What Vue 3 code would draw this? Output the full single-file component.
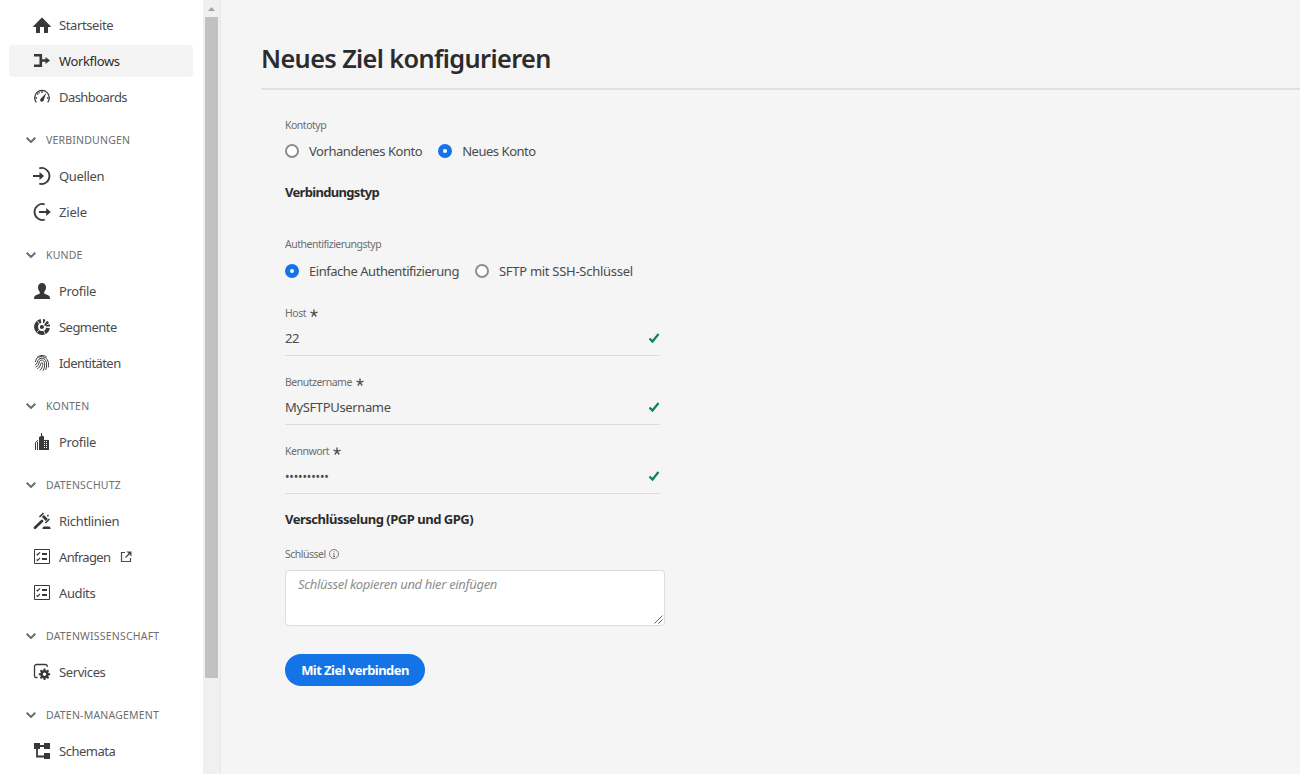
<script setup>
import { ref } from 'vue'

// `track` is the letter spacing of a label, in pixels
const sections = [
  {
    items: [
      { icon: 'home', label: 'Startseite', track: -0.4 },
      { icon: 'workflow', label: 'Workflows', track: -0.35, active: true },
      { icon: 'gauge', label: 'Dashboards', track: -0.55 },
    ],
  },
  {
    title: 'VERBINDUNGEN',
    items: [
      { icon: 'login', label: 'Quellen', track: -0.35 },
      { icon: 'logout', label: 'Ziele', track: -0.2 },
    ],
  },
  {
    title: 'KUNDE',
    items: [
      { icon: 'user', label: 'Profile', track: -0.35 },
      { icon: 'segment', label: 'Segmente', track: -0.53 },
      { icon: 'finger', label: 'Identitäten', track: -0.57 },
    ],
  },
  { title: 'KONTEN', items: [{ icon: 'building', label: 'Profile', track: -0.35 }] },
  {
    title: 'DATENSCHUTZ',
    items: [
      { icon: 'gavel', label: 'Richtlinien', track: -0.33 },
      { icon: 'checklist', label: 'Anfragen', track: -0.64, external: true },
      { icon: 'checklist', label: 'Audits', track: -0.4 },
    ],
  },
  { title: 'DATENWISSENSCHAFT', items: [{ icon: 'service', label: 'Services', track: -0.4 }] },
  { title: 'DATEN-MANAGEMENT', items: [{ icon: 'schema', label: 'Schemata', track: -0.48 }] },
]

const fields = [
  { label: 'Host', value: '22' },
  { label: 'Benutzername', value: 'MySFTPUsername' },
  { label: 'Kennwort', value: '••••••••••', secret: true },
]

const account = ref('new')
const auth = ref('basic')
</script>

<template>
  <div class="app">
    <svg class="sprite" width="0" height="0" aria-hidden="true">
      <symbol id="home" viewBox="0 0 18 18">
        <path d="M9.6 2 17.7 10.2c.3.4.1.8-.3.8H15v5.5c0 .3-.2.5-.5.5H11v-6H7v6H3.500c-.3 0-.5-.2-.5-.5V11H.6c-.4 0-.6-.4-.3-.8L8.400 2c.3-.4.9-.4 1.200 0z" fill="currentColor" />
      </symbol>
      <symbol id="workflow" viewBox="0 0 18 18">
        <path d="M1 3.300h6.800v10.400H1M8 8.500h5" fill="none" stroke="currentColor" stroke-width="2.600" />
        <path d="M12.500 5v7L17 8.500z" fill="currentColor" />
      </symbol>
      <symbol id="gauge" viewBox="0 0 18 18">
        <path d="M3.300 14.300A7.300 7.300 0 1 1 14.700 14.300" fill="none" stroke="currentColor" stroke-width="1.300" />
        <path d="M2.500 10H4M4.300 5.500l1 1M9 3.300v1.700M15.500 10H14M6 4.200l.4 1" fill="none" stroke="currentColor" stroke-width="1.400" />
        <path d="M13.200 5 10.700 12.200a1.800 1.800 0 1 1-2.800-1.700z" fill="currentColor" />
      </symbol>
      <symbol id="login" viewBox="0 0 18 18">
        <path d="M6.300 1.300a8 8 0 1 1 0 15.400" fill="none" stroke="currentColor" stroke-width="1.800" />
        <path d="M0 8h6.500V5l4.600 4-4.600 4v-3H0z" fill="currentColor" />
      </symbol>
      <symbol id="logout" viewBox="0 0 18 18">
        <path d="M11.700 16.700A8 8 0 1 1 11.700 1.300" fill="none" stroke="currentColor" stroke-width="1.800" />
        <path d="M6 8h7.200V5l4.500 4-4.500 4v-3H6z" fill="currentColor" />
      </symbol>
      <symbol id="user" viewBox="0 0 18 18">
        <path d="M9 1c2.400 0 4 1.700 4 4.200 0 2-.8 3.500-1.800 4.500v1.500c0 .5.3.7.8.9 3 .8 5 1.600 5 4.100v.8H1v-.8c0-2.500 2-3.300 5-4.100.5-.2.8-.4.8-.9V9.700C5.800 8.700 5 7.200 5 5.200 5 2.700 6.600 1 9 1z" fill="currentColor" />
      </symbol>
      <symbol id="segment" viewBox="0 0 18 18">
        <path d="M8 3A6 6 0 1 0 15 10" fill="none" stroke="currentColor" stroke-width="4" />
        <path d="M10 1a8 8 0 0 1 2.500.8L11 5.300l-1-.3zM14 2.800a8 8 0 0 1 2 2.200l-4 3-1-1zM16.600 6.300c.3.700.4 1.400.4 2.100h-4l-.3-1z" fill="currentColor" />
        <circle cx="8.900" cy="9" r="2.100" fill="currentColor" />
        <path d="m4.500 3 2 3M4 14l2-2M10.700 12.500l1.500 3.500" stroke="#fff" stroke-width=".8" />
      </symbol>
      <symbol id="finger" viewBox="0 0 18 18">
        <path d="M4.200 3.300C7 .9 11.300.9 13.700 3.200M2.500 8C2.700 2.900 7.400 1.800 11 3.100c3.800 1.400 5.200 5.800 4.300 10.300M2.200 10.800C5 10 3.800 7 6 5.200c2.500-2 6.300-.6 7.200 2.600.7 2.600.5 5.400-.5 8M2.600 13c4.200-1.400 2.800-4.800 4.500-6.300 1.900-1.600 4.300.1 4.500 2.600.3 2.700-.3 5.200-1.600 7.400M4.200 14.900c4-2.200 3-5.800 4.500-6.300 1.700-.3 1.500 4.500-1.800 7.800" fill="none" stroke="currentColor" stroke-width="1" />
      </symbol>
      <symbol id="building" viewBox="0 0 18 18">
        <path d="M6 17V4l2-1V0h1v2.500l2 1V7h5v10z" fill="currentColor" />
        <path d="M2.500 17V9.500L5 7.200M4.500 17V9" fill="none" stroke="currentColor" stroke-width="1" />
        <path d="M11 8.500h1m1 0h1m-3 2h1m1 0h1m-3 2h1m1 0h1m-3 2h1m1 0h1" stroke="#fff" stroke-width="1" />
      </symbol>
      <symbol id="gavel" viewBox="0 0 18 18">
        <path d="M2 15.800 9 9" stroke="currentColor" stroke-width="2.700" stroke-linecap="round" />
        <path d="m8.800 4.800 2.200-1.700 3.900 3.800-2.200 2zM9.500 17v-1.200l1.200-1.300h5.600l1.200 1.300V17z" fill="currentColor" />
        <path d="m6.500 5 4-4M12.400 11l4-4M14.300 4.200l1.200-1.200" stroke="currentColor" stroke-width="1.600" />
      </symbol>
      <symbol id="checklist" viewBox="0 0 18 18">
        <path d="M1.500 1.500h15v14h-15z" fill="none" stroke="currentColor" stroke-width="1" />
        <path d="m3.600 6 1 1L7 4.400M3.600 11.500l1 1L7 9.900" fill="none" stroke="currentColor" stroke-width="1.200" />
        <path d="M9 5h5v2H9zM9 10h5v2H9z" fill="currentColor" />
      </symbol>
      <symbol id="service" viewBox="0 0 18 18">
        <path d="M4.500 14.500H3A1.500 1.500 0 0 1 1.500 13V3.500A2 2 0 0 1 3.500 1.500h9a2 2 0 0 1 1.800 2V4" fill="none" stroke="currentColor" stroke-width="1.300" />
        <path d="M11.500 5.500v11.400M5.800 11.200h11.400M7.500 7.200l8 8M15.500 7.200l-8 8" stroke="currentColor" stroke-width="2" />
        <circle cx="11.500" cy="11.200" r="3" fill="#fff" stroke="currentColor" stroke-width="2.600" />
      </symbol>
      <symbol id="schema" viewBox="0 0 18 18">
        <path d="M1 1h6v6H1zM11 1h6v6h-6zM11 11h6v6h-6z" fill="currentColor" />
        <path d="M6 4h6M4 6v8.500h8" fill="none" stroke="currentColor" stroke-width="1.800" />
      </symbol>
    </svg>

    <nav class="sidebar">
      <section v-for="(s, i) in sections" :key="i" class="section">
        <h2 v-if="s.title" class="section-title">
          <svg class="chevron" viewBox="0 0 10 6"><path d="M.7.700l4.300 4.300L9.300.7" /></svg>
          <span>{{ s.title }}</span>
        </h2>
        <a v-for="item in s.items" :key="item.label" class="item" :class="{ active: item.active }">
          <svg class="icon"><use :href="'#' + item.icon" /></svg>
          <span :style="{ letterSpacing: item.track + 'px' }">{{ item.label }}</span>
          <svg v-if="item.external" class="external" viewBox="0 0 12 12">
            <path d="M5 1.500H1.500v9h9V7" />
            <path d="M5.500 6.500 10 2" />
            <path d="M6.500.500H11.500V5.500z" class="solid" />
          </svg>
        </a>
      </section>
    </nav>

    <div class="scrollbar">
      <svg class="arrow" viewBox="0 0 17 17"><path d="M5 11h7L8.500 7z" /></svg>
      <div class="thumb"></div>
    </div>

    <main class="content">
      <h1>Neues Ziel konfigurieren</h1>
      <form class="form" @submit.prevent>
        <div class="label">Kontotyp</div>
        <div class="radios">
          <label class="radio" :class="{ on: account === 'old' }" @click="account = 'old'"><i></i><span>Vorhandenes Konto</span></label>
          <label class="radio" :class="{ on: account === 'new' }" @click="account = 'new'"><i></i><span>Neues Konto</span></label>
        </div>
        <h3 class="connection">Verbindungstyp</h3>
        <div class="label auth-label">Authentifizierungstyp</div>
        <div class="radios auth">
          <label class="radio" :class="{ on: auth === 'basic' }" @click="auth = 'basic'"><i></i><span>Einfache Authentifizierung</span></label>
          <label class="radio ssh" :class="{ on: auth === 'ssh' }" @click="auth = 'ssh'"><i></i><span>SFTP mit SSH-Schlüssel</span></label>
        </div>

        <div v-for="f in fields" :key="f.label" class="field">
          <div class="label">
            {{ f.label }}
            <svg class="star" viewBox="0 0 8 8"><path d="M4 4.300V.500M4 4.300.400 3.200M4 4.300l3.600-1.100M4 4.300 1.800 7.500M4 4.300l2.200 3.200" /></svg>
          </div>
          <div class="value">
            <span :class="{ secret: f.secret }">{{ f.value }}</span>
            <svg class="check" viewBox="0 0 12 12"><path d="M1.500 6.500 4.500 9.500 10.500 2" /></svg>
          </div>
        </div>

        <h3 class="encryption">Verschlüsselung (PGP und GPG)</h3>
        <div class="label key-label">
          Schlüssel
          <svg class="info" viewBox="0 0 10 10"><circle cx="5" cy="5" r="4.500" /><path d="M5 2.300v1M4.200 4.500H5v3M4 7.500h2" /></svg>
        </div>
        <div class="textarea">
          <span>Schlüssel kopieren und hier einfügen</span>
          <svg class="grip" viewBox="0 0 9 9"><path d="M.5 8.500l8-8M4.500 8.500l4-4" /></svg>
        </div>
        <button class="submit"><span>Mit Ziel verbinden</span></button>
      </form>
    </main>
  </div>
</template>

<style>
body {
  background: #f5f5f5;
}
</style>

<style scoped>
.app {
  display: flex;
  height: 774px;
  overflow: hidden;
  background: #f5f5f5;
  color: #4b4b4b;
  font-family: "Noto Sans", "Open Sans", sans-serif;
  font-size: 13px;
  letter-spacing: -0.46px;
  line-height: 20px;
}
.sprite {
  position: absolute;
}
.sidebar {
  box-sizing: border-box;
  width: 203px;
  flex: none;
  padding: 9px 10px 0 9px;
  background: #fff;
}
.section-title {
  display: flex;
  align-items: center;
  height: 16px;
  margin: 19px 0 12px;
  padding-left: 17px;
  color: #6e6e6e;
  font-size: 10.5px;
  font-weight: 400;
  letter-spacing: 0.2px;
}
.chevron {
  width: 10px;
  height: 6px;
  margin-right: 10px;
  fill: none;
  stroke: #6e6e6e;
  stroke-width: 2;
}
.item {
  display: flex;
  align-items: center;
  height: 32px;
  padding-left: 24px;
  border-radius: 4px;
}
.item + .item {
  margin-top: 4px;
}
.item.active {
  background: #f3f3f3;
  color: #2c2c2c;
}
.icon {
  width: 18px;
  height: 18px;
  margin-right: 8px;
  color: #383838;
}
.external {
  width: 12px;
  height: 12px;
  margin-left: 10px;
  fill: none;
  stroke: #4b4b4b;
  stroke-width: 1.200;
}
.external .solid {
  fill: #4b4b4b;
  stroke: none;
}
.scrollbar {
  width: 17px;
  flex: none;
  background: #f0f0f0;
  border-right: 1px solid #e8e8e8;
}
.arrow {
  display: block;
  width: 17px;
  height: 17px;
  fill: #a3a3a3;
}
.thumb {
  width: 13px;
  height: 661px;
  margin-left: 2px;
  background: #c1c1c1;
}
.content {
  flex: 1;
  padding: 40px 0 0 40px;
}
h1 {
  margin: 0;
  padding-bottom: 12px;
  border-bottom: 2px solid #e1e1e1;
  color: #2c2c2c;
  font-size: 25.3px;
  font-weight: 600;
  letter-spacing: -0.62px;
  line-height: 36px;
}
.form {
  width: 380px;
  padding: 28px 0 0 24px;
}
.label {
  display: flex;
  align-items: center;
  height: 14px;
  color: #6e6e6e;
  font-size: 10.5px;
  letter-spacing: -0.5px;
  line-height: 14px;
}
.radios {
  display: flex;
  gap: 16px;
  height: 20px;
  margin-top: 9px;
}
.radio {
  display: flex;
  align-items: center;
  white-space: nowrap;
}
.radio.ssh {
  letter-spacing: -0.28px;
}
.radio i {
  box-sizing: border-box;
  width: 14px;
  height: 14px;
  margin-right: 10px;
  border: 2px solid #8e8e8e;
  border-radius: 50%;
  background: #fff;
}
.radio.on i {
  border: 5px solid #1473e6;
}
h3 {
  margin: 0;
  height: 20px;
  color: #2c2c2c;
  font-size: 13px;
  font-weight: 700;
  line-height: 20px;
}
.connection {
  margin-top: 21px;
  letter-spacing: -0.68px;
}
.auth-label {
  margin-top: 35px;
}
.radios.auth {
  margin: 10px 0 25px;
}
.field {
  width: 375px;
  height: 69px;
}
.star {
  width: 8px;
  height: 8px;
  margin-left: 4px;
  fill: none;
  stroke: #555;
  stroke-width: 1.400;
}
.value {
  display: flex;
  align-items: center;
  justify-content: space-between;
  height: 35px;
  border-bottom: 1px solid #dcdcdc;
  letter-spacing: -0.36px;
}
.secret {
  padding-top: 2px;
  font-size: 12px;
  letter-spacing: -0.15px;
}
.check {
  width: 12px;
  height: 12px;
  fill: none;
  stroke: #12805c;
  stroke-width: 2.200;
}
.encryption {
  margin-top: -4px;
  letter-spacing: -0.48px;
}
.key-label {
  margin-top: 18px;
}
.info {
  width: 10px;
  height: 10px;
  margin-left: 3px;
  fill: none;
  stroke: #6e6e6e;
  stroke-width: 0.900;
}
.textarea {
  position: relative;
  box-sizing: border-box;
  width: 380px;
  height: 56px;
  margin-top: 9px;
  padding: 3px 12px;
  border: 1px solid #dcdcdc;
  border-radius: 4px;
  background: #fff;
  color: #8e8e8e;
  font-style: italic;
  letter-spacing: -0.33px;
}
.grip {
  position: absolute;
  right: 1px;
  bottom: 1px;
  width: 9px;
  height: 9px;
  fill: none;
  stroke: #555;
  stroke-width: 0.900;
}
.submit {
  display: block;
  width: 140px;
  height: 32px;
  margin-top: 28px;
  padding: 0;
  border: 0;
  border-radius: 16px;
  background: #1473e6;
  color: #fff;
  font: inherit;
  font-weight: 700;
  letter-spacing: -0.55px;
  white-space: nowrap;
}
</style>
